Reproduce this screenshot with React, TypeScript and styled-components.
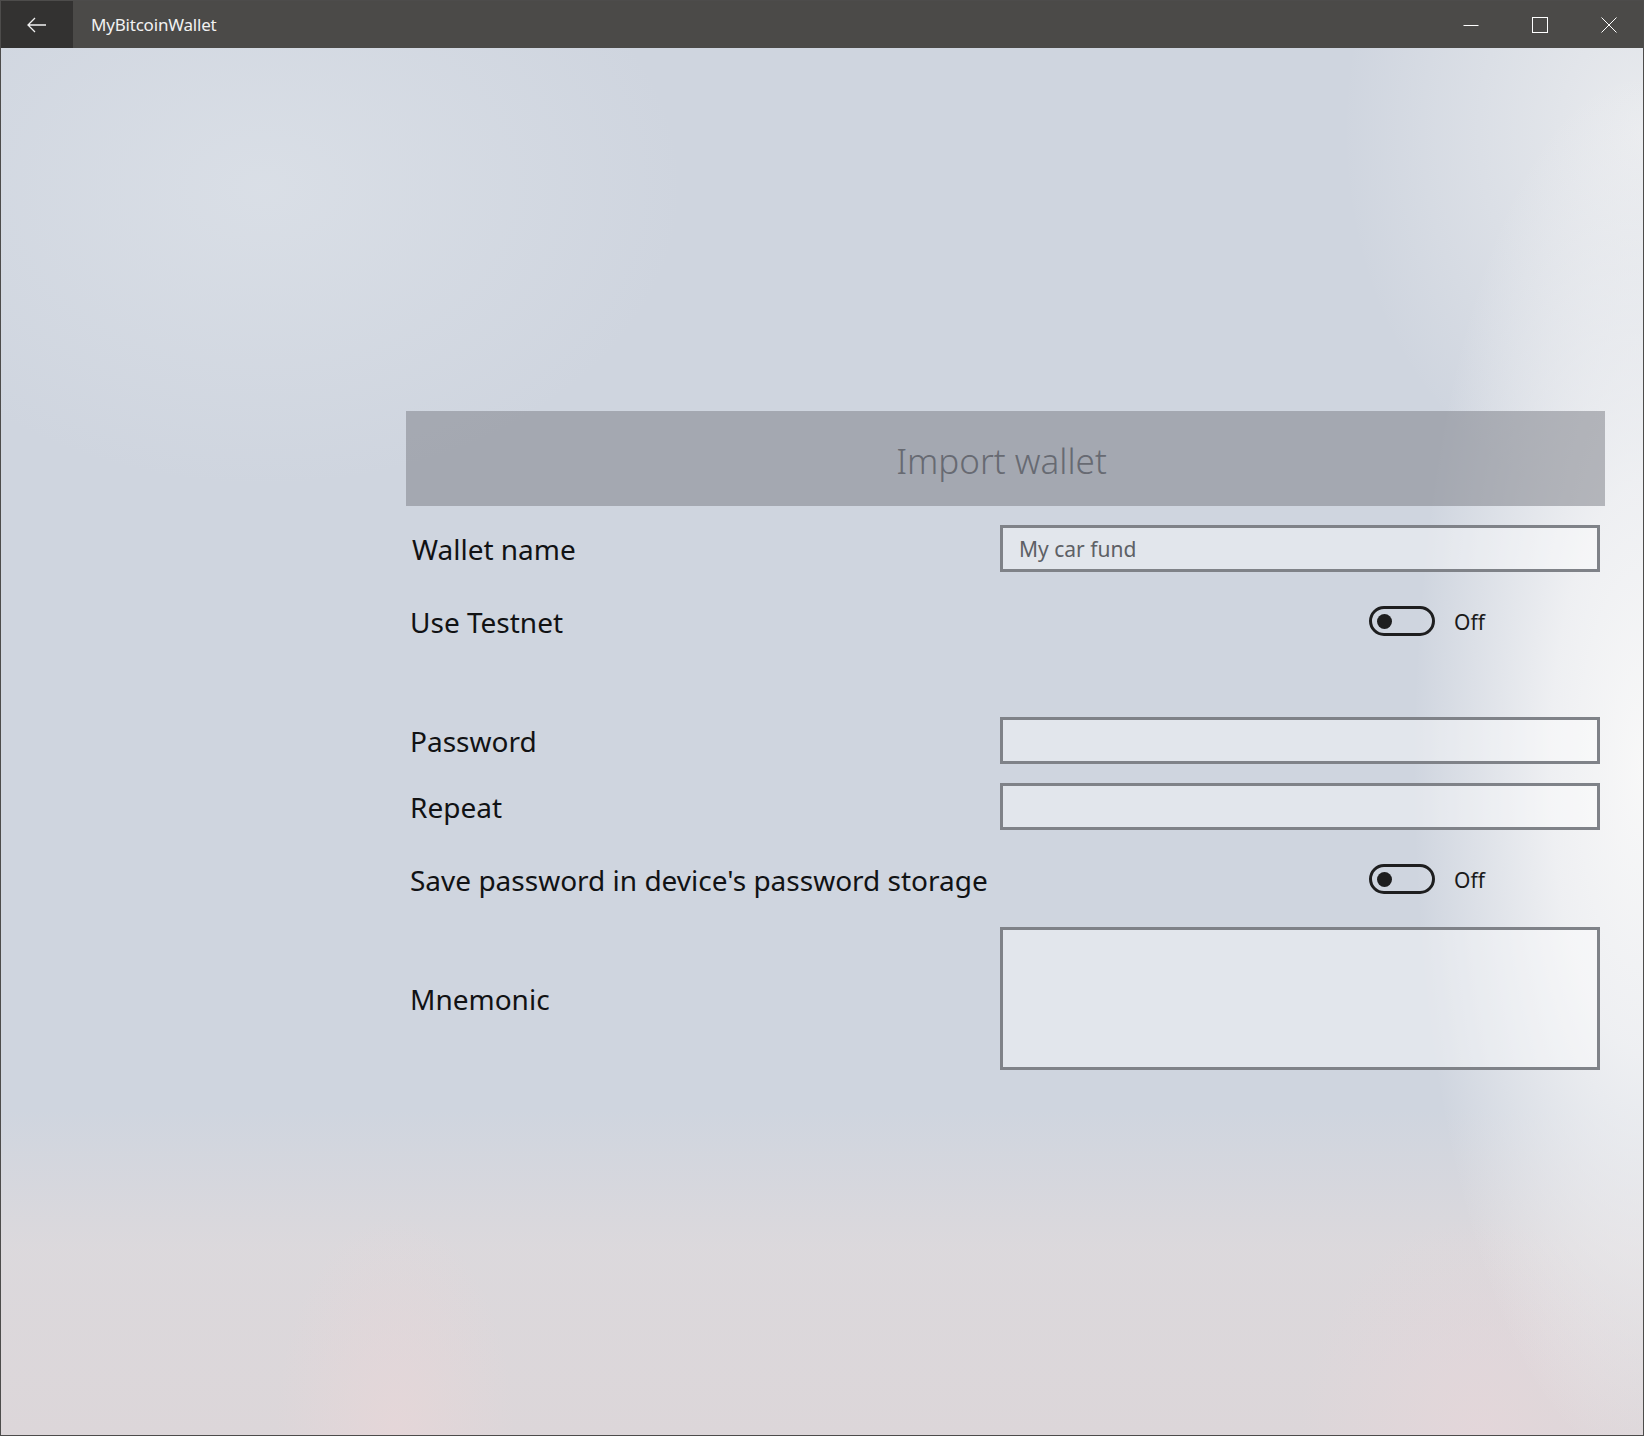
import styled, { createGlobalStyle } from "styled-components";

const GlobalStyle = createGlobalStyle`
  html, body {
    margin: 0;
    padding: 0;
    background: #4d4c4b;
  }
  * {
    box-sizing: border-box;
  }
`;

function BackArrow() {
  return (
    <svg width="20" height="16" viewBox="0 0 20 16" fill="none">
      <path d="M1 8 H19 M8 1 L1 8 L8 15" stroke="#f2f2f2" strokeWidth="1.3" />
    </svg>
  );
}

function MinimizeIcon() {
  return (
    <svg width="16" height="16" viewBox="0 0 16 16">
      <path d="M0.5 8.5 H15.5" stroke="#fff" strokeWidth="1" />
    </svg>
  );
}

function MaximizeIcon() {
  return (
    <svg width="16" height="16" viewBox="0 0 16 16">
      <rect x="0.5" y="0.5" width="15" height="15" stroke="#fff" strokeWidth="1" fill="none" />
    </svg>
  );
}

function CloseIcon() {
  return (
    <svg width="16" height="16" viewBox="0 0 16 16">
      <path d="M0.5 0.5 L15.5 15.5 M15.5 0.5 L0.5 15.5" stroke="#fff" strokeWidth="1" />
    </svg>
  );
}

function ToggleSwitch({ label }: { label: string }) {
  return (
    <ToggleWrap>
      <Track>
        <Knob />
      </Track>
      <StateText>{label}</StateText>
    </ToggleWrap>
  );
}

function App() {
  return (
    <>
      <GlobalStyle />
      <Window>
        <TitleBar>
          <BackButton>
            <BackArrow />
          </BackButton>
          <AppTitle>MyBitcoinWallet</AppTitle>
          <Spacer />
          <CaptionButton>
            <MinimizeIcon />
          </CaptionButton>
          <CaptionButton>
            <MaximizeIcon />
          </CaptionButton>
          <CaptionButton>
            <CloseIcon />
          </CaptionButton>
        </TitleBar>

        <Content>
          <Form>
            <Header>Import wallet</Header>

            <FieldRow $gap={19} $height={47}>
              <Label $shift={2}>Wallet name</Label>
              <TextBox type="text" placeholder="My car fund" />
            </FieldRow>

            <FieldRow $gap={34} $height={30}>
              <Label>Use Testnet</Label>
              <ToggleSwitch label="Off" />
            </FieldRow>

            <FieldRow $gap={81} $height={47}>
              <Label>Password</Label>
              <TextBox type="password" />
            </FieldRow>

            <FieldRow $gap={19} $height={47}>
              <Label>Repeat</Label>
              <TextBox type="password" />
            </FieldRow>

            <FieldRow $gap={34} $height={30}>
              <Label>Save password in device's password storage</Label>
              <ToggleSwitch label="Off" />
            </FieldRow>

            <FieldRow $gap={33} $height={143}>
              <Label>Mnemonic</Label>
              <TextArea />
            </FieldRow>
          </Form>
        </Content>
      </Window>
    </>
  );
}

const Window = styled.div`
  width: 1644px;
  height: 1436px;
  border: 1px solid #4d4c4b;
  display: flex;
  flex-direction: column;
  overflow: hidden;
  font-family: "Noto Sans", "Open Sans", sans-serif;
`;

const TitleBar = styled.div`
  height: 47px;
  flex-shrink: 0;
  display: flex;
  align-items: stretch;
  background: #4b4a48;
`;

const BackButton = styled.div`
  width: 72px;
  background: #333231;
  display: flex;
  align-items: center;
  justify-content: center;
`;

const AppTitle = styled.div`
  align-self: center;
  padding-left: 18px;
  font-size: 17px;
  color: #f2f2f2;
  letter-spacing: -0.2px;
`;

const Spacer = styled.div`
  flex: 1;
`;

const CaptionButton = styled.div`
  width: 69px;
  display: flex;
  align-items: center;
  justify-content: center;
`;

const Content = styled.div`
  flex: 1;
  padding: 363px 38px 0 405px;
  background:
    radial-gradient(ellipse 230px 700px at 100% 52%, rgba(248, 248, 248, 1) 0%, rgba(246, 246, 247, 0.8) 40%, rgba(240, 241, 243, 0) 100%),
    radial-gradient(ellipse 300px 380px at 100% 6%, rgba(238, 239, 241, 0.85) 0%, rgba(236, 238, 240, 0) 100%),
    radial-gradient(ellipse 120px 220px at 24% 100%, rgba(232, 214, 216, 0.7) 0%, rgba(232, 214, 216, 0) 100%),
    radial-gradient(ellipse 180px 220px at 90% 100%, rgba(230, 214, 218, 0.7) 0%, rgba(230, 214, 218, 0) 100%),
    linear-gradient(to bottom, rgba(221, 215, 218, 0) 0px, rgba(221, 215, 218, 0) 1060px, rgba(221, 217, 220, 0.9) 1200px, rgba(220, 214, 217, 1) 1387px),
    radial-gradient(ellipse 420px 300px at 16% 10%, rgba(220, 225, 232, 0.8) 0%, rgba(220, 225, 232, 0) 100%),
    #cfd5df;
`;

const Form = styled.div`
  display: flex;
  flex-direction: column;
`;

const Header = styled.div`
  height: 95px;
  display: flex;
  align-items: center;
  justify-content: center;
  background: rgba(122, 124, 132, 0.5);
  font-size: 35px;
  font-weight: 300;
  color: #676a72;
  padding: 4px 8px 0 0;
`;

const FieldRow = styled.div<{ $gap: number; $height: number }>`
  display: grid;
  grid-template-columns: 590px 600px;
  grid-template-rows: ${(p) => p.$height}px;
  align-items: center;
  padding-left: 4px;
  margin-top: ${(p) => p.$gap}px;
  height: ${(p) => p.$height}px;
`;

const Label = styled.div<{ $shift?: number }>`
  font-size: 28px;
  line-height: 1.2;
  color: #111214;
  padding-top: 3px;
  padding-left: ${(p) => p.$shift ?? 0}px;
  white-space: nowrap;
`;

const TextBox = styled.input`
  width: 100%;
  height: 47px;
  border: 3px solid #7f8288;
  border-radius: 0;
  background: rgba(255, 255, 255, 0.4);
  padding: 0 16px;
  font-family: "Noto Sans", "Open Sans", sans-serif;
  font-size: 21px;
  color: #1a1a1a;
  outline: none;

  &::placeholder {
    color: #5d6065;
  }
`;

const TextArea = styled.textarea`
  width: 100%;
  height: 143px;
  border: 3px solid #7f8288;
  border-radius: 0;
  background: rgba(255, 255, 255, 0.4);
  padding: 8px 16px;
  font-family: "Noto Sans", "Open Sans", sans-serif;
  font-size: 21px;
  resize: none;
  outline: none;
`;

const ToggleWrap = styled.div`
  justify-self: end;
  width: 231px;
  display: flex;
  align-items: center;
  gap: 19px;
`;

const Track = styled.div`
  width: 66px;
  height: 30px;
  border: 3px solid #1e1e1f;
  border-radius: 15px;
  padding-left: 5px;
  display: flex;
  align-items: center;
`;

const Knob = styled.div`
  width: 15px;
  height: 15px;
  border-radius: 50%;
  background: #1e1e1f;
`;

const StateText = styled.span`
  font-size: 21px;
  color: #1a1a1a;
  padding-top: 1px;
`;

export default App;
